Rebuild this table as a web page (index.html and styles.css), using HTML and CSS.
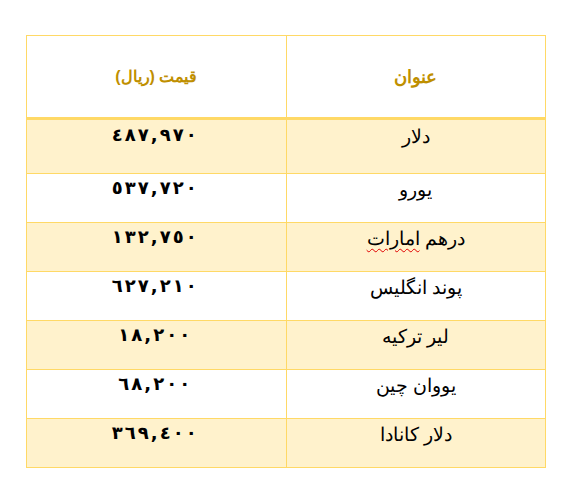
FILE: index.html
```html
<!DOCTYPE html>
<html lang="fa" dir="rtl">
<head>
<meta charset="utf-8">
<link rel="stylesheet" href="styles.css">
</head>
<body>
<table class="rates">
  <thead>
    <tr>
      <th class="name-head">عنوان</th>
      <th class="price-head">قیمت (ریال)</th>
    </tr>
  </thead>
  <tbody>
    <tr class="band first"><td class="name">دلار</td><td class="price"><span class="num"><span>٤</span><span>٨</span><span>٧</span><span>,</span><span>٩</span><span>٧</span><span>٠</span></span></td></tr>
    <tr><td class="name">یورو</td><td class="price"><span class="num"><span>٥</span><span>٣</span><span>٧</span><span>,</span><span>٧</span><span>٢</span><span>٠</span></span></td></tr>
    <tr class="band"><td class="name">درهم <span class="spell">امارات</span></td><td class="price"><span class="num"><span>١</span><span>٣</span><span>٢</span><span>,</span><span>٧</span><span>٥</span><span>٠</span></span></td></tr>
    <tr><td class="name">پوند انگلیس</td><td class="price"><span class="num"><span>٦</span><span>٢</span><span>٧</span><span>,</span><span>٢</span><span>١</span><span>٠</span></span></td></tr>
    <tr class="band"><td class="name">لیر ترکیه</td><td class="price"><span class="num"><span>١</span><span>٨</span><span>,</span><span>٢</span><span>٠</span><span>٠</span></span></td></tr>
    <tr><td class="name">یووان چین</td><td class="price"><span class="num"><span>٦</span><span>٨</span><span>,</span><span>٢</span><span>٠</span><span>٠</span></span></td></tr>
    <tr class="band"><td class="name">دلار کانادا</td><td class="price"><span class="num"><span>٣</span><span>٦</span><span>٩</span><span>,</span><span>٤</span><span>٠</span><span>٠</span></span></td></tr>
  </tbody>
</table>
</body>
</html>
```

FILE: styles.css
```css
html, body {
  margin: 0;
  padding: 0;
  background: #ffffff;
}

body {
  padding: 35px 0 0 26px;
  direction: rtl;
}

.rates {
  border-collapse: collapse;
  width: 520px;
  margin-right: 27px;
  table-layout: fixed;
}

.rates th,
.rates td {
  border: 1px solid #ffd966;
  text-align: center;
  width: 50%;
}

.rates th {
  height: 81px;
  padding: 0;
  vertical-align: middle;
  color: #bf8f00;
  font-family: "Liberation Sans", Arial, sans-serif;
  border-bottom: 3px solid #ffd966;
}

.name-head {
  font-weight: bold;
  font-size: 18px;
}

.price-head {
  font-weight: bold;
  font-size: 16px;
}

.rates td {
  height: 49px;
  padding: 4px 0 0 0;
  vertical-align: top;
  box-sizing: border-box;
}

.rates tr.first td {
  height: 55px;
  padding-top: 5px;
}

.rates tr.band td {
  background: #fff2cc;
}

.name {
  font-family: "Liberation Sans", Arial, sans-serif;
  font-size: 19px;
  color: #000;
}

.price {
  color: #000;
}

.num {
  display: inline-flex;
  direction: ltr;
  gap: 2px;
  margin-top: -1px;
  margin-right: 4px;
  font-family: "DejaVu Sans", sans-serif;
  font-weight: bold;
  font-size: 18px;
}

.spell {
  text-decoration: underline wavy #e00000;
  text-decoration-thickness: 1px;
  text-underline-offset: 3px;
}
```
